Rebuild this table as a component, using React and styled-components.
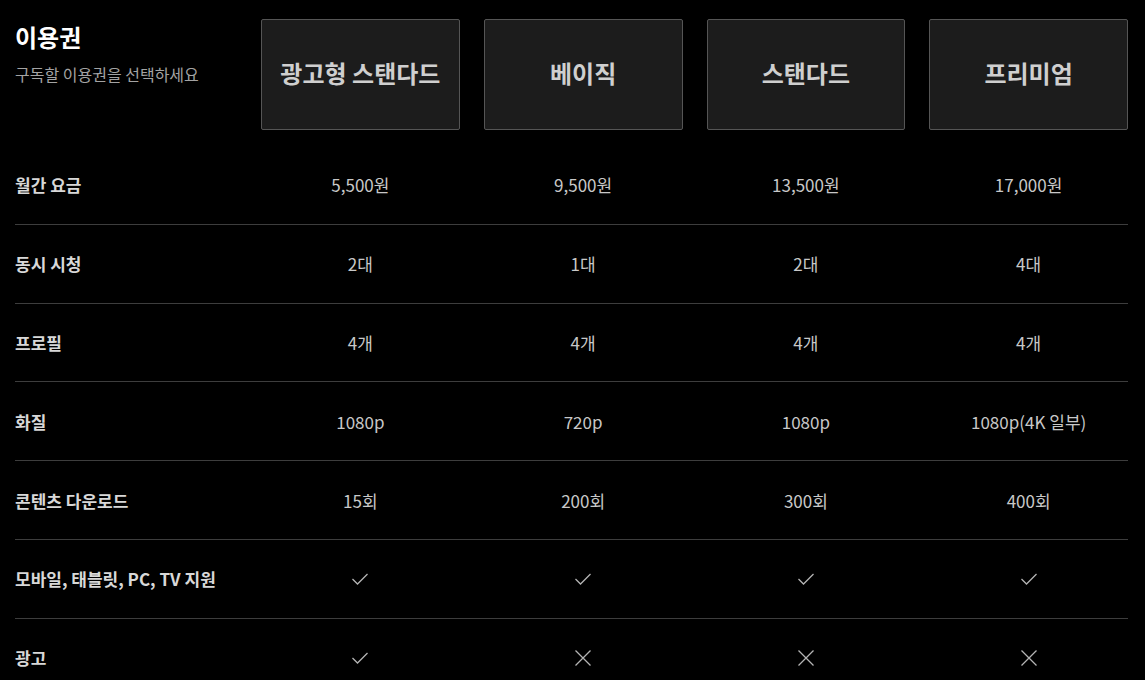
import React from 'react'
import styled, { createGlobalStyle } from 'styled-components'

const GlobalStyle = createGlobalStyle`
  html, body {
    margin: 0;
    padding: 0;
    background: #000;
  }
  body {
    font-family: "Noto Sans CJK KR", "Noto Sans", sans-serif;
    color: #ccc;
  }
`

const Page = styled.div`
  padding: 19px 17px 0 15px;
`

const Grid = styled.div`
  display: grid;
  grid-template-columns: 222px repeat(4, 1fr);
  column-gap: 24px;
`

const HeaderRow = styled(Grid)`
  margin-bottom: 16px;
`

const Intro = styled.div`
  display: flex;
  flex-direction: column;
`

const Title = styled.h1`
  margin: 1px 0 0;
  font-size: 24px;
  line-height: 34px;
  font-weight: 700;
  color: #fff;
`

const Subtitle = styled.p`
  margin: 9px 0 0;
  font-size: 16px;
  line-height: 22px;
  color: #a3a3a3;
`

const PlanCard = styled.div`
  height: 111px;
  padding-bottom: 4px;
  box-sizing: border-box;
  display: flex;
  align-items: center;
  justify-content: center;
  background: #1c1c1c;
  border: 1px solid #555;
  border-radius: 2px;
  font-size: 24px;
  font-weight: 700;
  color: #cfcfcf;
`

const Row = styled(Grid)`
  height: 77.8px;
  align-items: center;
  border-bottom: 1px solid #3d3d3d;
`

const Label = styled.div`
  font-size: 17px;
  font-weight: 700;
  color: #d8d8d8;
`

const Cell = styled.div`
  display: flex;
  justify-content: center;
  align-items: center;
  font-size: 17px;
  color: #c8c8c8;
`

const Check = () => (
  <svg width="18" height="14" viewBox="0 0 18 14" fill="none">
    <polyline points="1.5,7 6.5,12 16.5,2" stroke="#b4b4b4" strokeWidth="1.3" />
  </svg>
)

const Cross = () => (
  <svg width="18" height="18" viewBox="0 0 18 18" fill="none">
    <path d="M1.5 1.5 L16.5 16.5 M16.5 1.5 L1.5 16.5" stroke="#b4b4b4" strokeWidth="1.3" />
  </svg>
)

const plans = ['광고형 스탠다드', '베이직', '스탠다드', '프리미엄']

const rows = [
  { label: '월간 요금', values: ['5,500원', '9,500원', '13,500원', '17,000원'] },
  { label: '동시 시청', values: ['2대', '1대', '2대', '4대'] },
  { label: '프로필', values: ['4개', '4개', '4개', '4개'] },
  { label: '화질', values: ['1080p', '720p', '1080p', '1080p(4K 일부)'] },
  { label: '콘텐츠 다운로드', values: ['15회', '200회', '300회', '400회'] },
  { label: '모바일, 태블릿, PC, TV 지원', values: [true, true, true, true] },
  { label: '광고', values: [true, false, false, false] },
]

export default function App() {
  return (
    <Page>
      <GlobalStyle />
      <HeaderRow>
        <Intro>
          <Title>이용권</Title>
          <Subtitle>구독할 이용권을 선택하세요</Subtitle>
        </Intro>
        {plans.map((p) => (
          <PlanCard key={p}>{p}</PlanCard>
        ))}
      </HeaderRow>
      {rows.map((r) => (
        <Row key={r.label}>
          <Label>{r.label}</Label>
          {r.values.map((v, i) => (
            <Cell key={i}>
              {v === true ? <Check /> : v === false ? <Cross /> : v}
            </Cell>
          ))}
        </Row>
      ))}
    </Page>
  )
}
